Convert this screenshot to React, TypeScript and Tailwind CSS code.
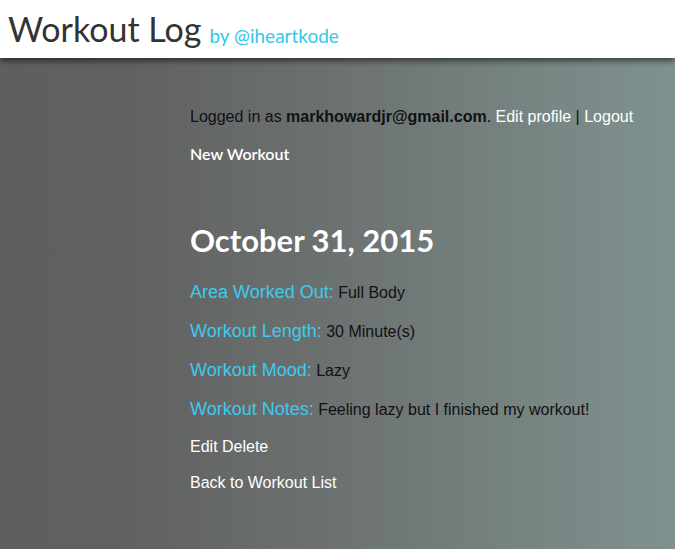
export default function App() {
  const rows = [
    { label: "Area Worked Out:", value: "Full Body" },
    { label: "Workout Length:", value: "30 Minute(s)" },
    { label: "Workout Mood:", value: "Lazy" },
    { label: "Workout Notes:", value: "Feeling lazy but I finished my workout!" },
  ];

  return (
    <div className="min-h-[549px] flex flex-col bg-[linear-gradient(90deg,#5f5f5f_0%,#606060_17%,#6c7271_50%,#7f928f_100%)] font-['Liberation_Sans',Arial,sans-serif]">
      <header className="relative z-10 h-[58px] bg-white shadow-[0_3px_6px_rgba(0,0,0,0.55)] flex items-end pb-[12px] px-[8px]">
        <span className="font-['Lato',sans-serif] font-normal text-[34px] leading-none text-[#333]">
          Workout Log
        </span>
        <span className="ml-[8px] font-['Lato',sans-serif] text-[19px] leading-none text-[#33c6ec] mb-[1px]">
          by @iheartkode
        </span>
      </header>

      <main className="pl-[190px] pt-[49px]">
        <p className="text-[16px] leading-[20px] text-[#111]">
          Logged in as <b>markhowardjr@gmail.com</b>.{" "}
          <a className="text-white">Edit profile</a> |{" "}
          <a className="text-white">Logout</a>
        </p>
        <p className="mt-[17px] font-['Lato',sans-serif] font-semibold text-[16px] leading-[20px] text-white">
          New Workout
        </p>

        <h1 className="mt-[58px] font-['Lato',sans-serif] font-bold text-[31px] leading-[36px] text-white">
          October 31, 2015
        </h1>

        <div className="mt-[23px] flex flex-col gap-[16px]">
          {rows.map((r) => (
            <p key={r.label} className="leading-[22px]">
              <span className="text-[18px] text-[#3ccbf0]">{r.label}</span>{" "}
              <span className="text-[16px] text-[#111]">{r.value}</span>
            </p>
          ))}
        </div>

        <p className="mt-[16px] text-[16px] leading-[20px] text-white">Edit Delete</p>
        <p className="mt-[16px] text-[16px] leading-[20px] text-white">Back to Workout List</p>
      </main>
    </div>
  );
}
